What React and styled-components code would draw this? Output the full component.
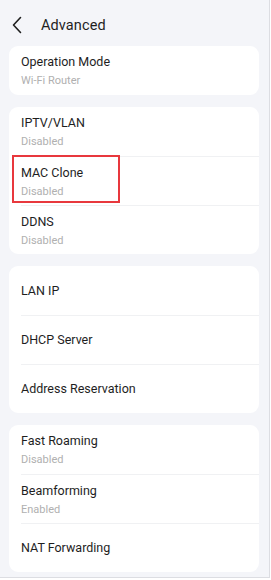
import styled, { createGlobalStyle } from "styled-components";

const GlobalStyle = createGlobalStyle`
  html, body {
    margin: 0;
    padding: 0;
    background: #ffffff;
  }
  * {
    box-sizing: border-box;
  }
`;

const Screen = styled.div`
  width: 270px;
  height: 578px;
  background-color: #f4f5f9;
  border-right: 1px solid #dcdde2;
  border-bottom: 1px solid #dcdde2;
  font-family: Roboto, "Noto Sans", sans-serif;
  overflow: hidden;
`;

const Header = styled.header`
  display: flex;
  align-items: center;
  height: 46px;
  padding-left: 11px;
  padding-top: 4px;
  gap: 16px;
  color: #1f1f1f;

  h1 {
    margin: 0;
    font-size: 14.5px;
    font-weight: 400;
    letter-spacing: 0.1px;
  }
`;

const BackIcon = styled.svg`
  width: 14px;
  height: 18px;
`;

const Cards = styled.div`
  display: flex;
  flex-direction: column;
  gap: 12px;
  padding: 0 10px 0 9px;
`;

const Card = styled.section`
  background-color: #ffffff;
  border-radius: 9px;
  overflow: hidden;
`;

const Row = styled.div`
  position: relative;
  display: flex;
  flex-direction: column;
  justify-content: center;
  height: 49px;
  padding-left: 12px;
  padding-top: ${(p) => (p.$sub ? "1px" : "0")};

  & + & {
    border-top: 1px solid #f0f1f3;
    margin-left: 12px;
    padding-left: 0;
  }
`;

const Title = styled.span`
  font-size: 12.5px;
  line-height: 16px;
  color: #1e1e1e;
`;

const Sub = styled.span`
  margin-top: 4px;
  font-size: 11px;
  line-height: 14px;
  color: #b0b0b0;
`;

const Highlight = styled.div`
  position: absolute;
  left: -9px;
  top: -2px;
  width: 108px;
  height: 48px;
  border: 2px solid #e8383d;
  pointer-events: none;
`;

const groups = [
  [{ title: "Operation Mode", sub: "Wi-Fi Router" }],
  [
    { title: "IPTV/VLAN", sub: "Disabled" },
    { title: "MAC Clone", sub: "Disabled", mark: true },
    { title: "DDNS", sub: "Disabled" },
  ],
  [{ title: "LAN IP" }, { title: "DHCP Server" }, { title: "Address Reservation" }],
  [
    { title: "Fast Roaming", sub: "Disabled" },
    { title: "Beamforming", sub: "Enabled" },
    { title: "NAT Forwarding" },
  ],
];

export default function App() {
  return (
    <>
      <GlobalStyle />
      <Screen>
        <Header>
          <BackIcon viewBox="0 0 14 18">
            <path
              d="M9.5 1.5 L2.5 9 L9.5 16.5"
              fill="none"
              stroke="#1f1f1f"
              strokeWidth="1.6"
              strokeLinecap="round"
              strokeLinejoin="round"
            />
          </BackIcon>
          <h1>Advanced</h1>
        </Header>
        <Cards>
          {groups.map((items, i) => (
            <Card key={i}>
              {items.map((item) => (
                <Row key={item.title} $sub={!!item.sub}>
                  <Title>{item.title}</Title>
                  {item.sub && <Sub>{item.sub}</Sub>}
                  {item.mark && <Highlight />}
                </Row>
              ))}
            </Card>
          ))}
        </Cards>
      </Screen>
    </>
  );
}
